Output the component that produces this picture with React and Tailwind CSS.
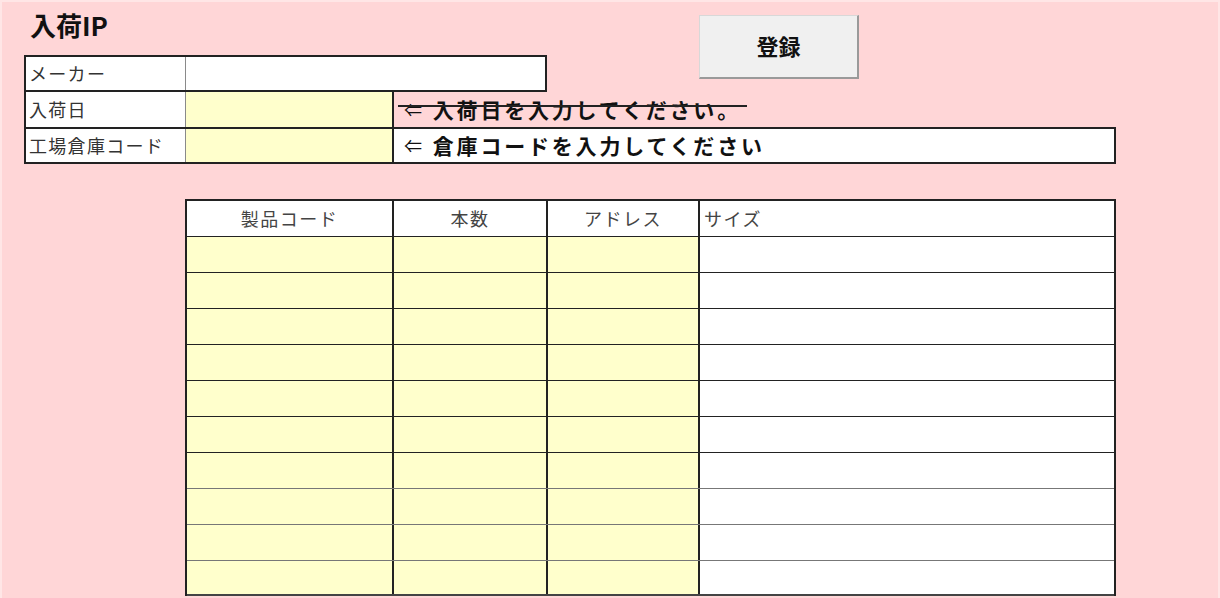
const rows = Array.from({ length: 10 });

const App = () => {
  return (
    <div className="relative h-[598px] w-[1220px] overflow-hidden border-x-2 border-t-2 border-[#ffe6e6] bg-[#ffd6d7] font-['Noto_Sans_CJK_JP','Noto_Sans',sans-serif] text-[#333]">
      {/* title */}
      <div className="h-[53px] pl-[28px] pt-[4px] text-[26px] font-bold leading-[38px] text-[#111]">入荷IP</div>

      {/* register button */}
      <button className="absolute left-[697px] top-[13px] flex h-[64px] w-[160px] items-center justify-center border border-[#d8d8d8] border-b-2 border-r-2 border-b-[#9a9a9a] border-r-[#9a9a9a] bg-[#f0f0f0] pb-[3px] text-[22px] font-bold text-[#111]">
        登録
      </button>

      {/* header form */}
      <div className="ml-[22px]">
        <div className="flex h-[37px] w-[523px] border-2 border-[#222] bg-white">
          <div className="flex w-[160px] items-center border-r border-[#8a8a8a] pl-[3px] text-[18px] tracking-[1.3px]">メーカー</div>
          <div className="flex-1" />
        </div>
        <div className="flex h-[35px]">
          <div className="flex w-[370px] border-x-2 border-[#222]">
            <div className="flex w-[160px] items-center border-r border-[#8a8a8a] bg-white pl-[3px] text-[18px] tracking-[1.3px]">入荷日</div>
            <div className="flex-1 bg-[#ffffcc]" />
          </div>
          <div className="relative flex items-center pl-[10px] pr-[6px] text-[21px] font-bold tracking-[2.8px] text-[#111]">
            <span className="pr-[8px] text-[18px] font-normal">⇐</span>
            入荷日を入力してください。
            <span className="absolute left-[4px] right-0 top-[13px] h-[2px] bg-[#222]" />
          </div>
        </div>
        <div className="flex h-[37px] w-[1092px] border-2 border-[#222] bg-white">
          <div className="flex w-[160px] items-center border-r border-[#8a8a8a] pl-[3px] text-[18px] tracking-[1.3px]">工場倉庫コード</div>
          <div className="w-[208px] border-r-2 border-[#222] bg-[#ffffcc]" />
          <div className="flex flex-1 items-center pl-[10px] text-[21px] font-bold tracking-[2.8px] text-[#111]">
            <span className="pr-[8px] text-[18px] font-normal">⇐</span>
            倉庫コードを入力してください
          </div>
        </div>
      </div>

      {/* detail table */}
      <div className="ml-[183px] mt-[35px] w-[931px] border-x-2 border-t-2 border-[#222]">
        <div className="flex h-[36px] border-b border-[#222] bg-white text-[18px] tracking-[1.5px] text-[#444]">
          <div className="flex w-[207px] items-center justify-center border-r-2 border-[#222]">製品コード</div>
          <div className="flex w-[154px] items-center justify-center border-r-2 border-[#222]">本数</div>
          <div className="flex w-[152px] items-center justify-center border-r-2 border-[#222]">アドレス</div>
          <div className="flex flex-1 items-center pl-[4px]">サイズ</div>
        </div>
        {rows.map((_, i) => (
          <div key={i} className={`flex border-b ${i === 9 ? "h-[35px] border-b-2 border-[#444]" : i < 6 ? "h-[36px] border-[#222]" : "h-[36px] border-[#777]"}`}>
            <div className="w-[207px] border-r-2 border-[#222] bg-[#ffffcc]" />
            <div className="w-[154px] border-r-2 border-[#222] bg-[#ffffcc]" />
            <div className="w-[152px] border-r-2 border-[#222] bg-[#ffffcc]" />
            <div className="flex-1 bg-white" />
          </div>
        ))}
      </div>
    </div>
  );
};

export default App;
